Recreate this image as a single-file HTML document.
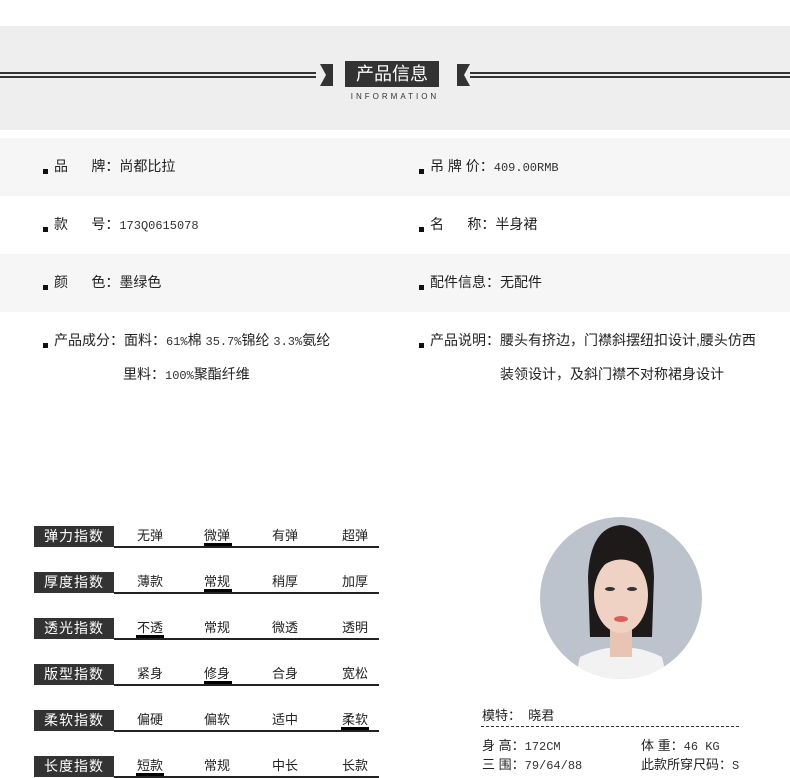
<!DOCTYPE html>
<html><head><meta charset="utf-8"><style>
body{margin:0;width:790px;height:778px;background:#fff;position:relative;overflow:hidden;font-family:"Liberation Sans","Noto Sans CJK SC",sans-serif;font-size:14px;color:#222}
.a{position:absolute}
.hdr{left:0;top:26px;width:790px;height:104px;background:#eeeeee}
.row{left:0;width:790px;height:58px}
.t{position:absolute;font-size:14px;white-space:nowrap}
.t b{font-weight:normal;font-family:"Liberation Mono","Noto Sans CJK SC",monospace;font-size:12px;color:#333}
.dot{position:absolute;width:5px;height:5px;background:#111}
.lab{position:absolute;left:34px;width:80px;height:21px;background:#333;color:#fff;font-size:14px;text-align:center;line-height:21px;letter-spacing:1px}
.ln{position:absolute;left:114px;width:265px;height:2px;background:#222}
.o{position:absolute;width:40px;text-align:center;font-size:13px}
.u{position:absolute;width:28px;height:3px;background:#000}
</style></head><body>
<div class="a hdr"></div>
<div class="a" style="left:0;top:72px;width:316px;height:2px;background:#333"></div>
<div class="a" style="left:0;top:76px;width:316px;height:2px;background:#333"></div>
<div class="a" style="left:470px;top:72px;width:320px;height:2px;background:#333"></div>
<div class="a" style="left:470px;top:76px;width:320px;height:2px;background:#333"></div>
<svg class="a" style="left:320px;top:62px" width="150" height="26"><polygon points="0,2 13,2 13,24 0,24 6,13" fill="#333"/><polygon points="150,2 137,2 137,24 150,24 144,13" fill="#333"/></svg>
<div class="a" style="left:345px;top:61px;width:94px;height:26px;background:#333;color:#fff;font-size:18px;text-align:center;line-height:26px">产品信息</div>
<div class="a" style="left:320px;top:92px;width:150px;text-align:center;font-size:8px;letter-spacing:3px;color:#333">INFORMATION</div>

<div class="a row" style="top:138px;background:#f6f6f6"></div>
<div class="a row" style="top:254px;background:#f6f6f6"></div>

<div class="dot" style="left:43px;top:169px"></div><div class="t" style="left:54px;top:156px">品&nbsp;&nbsp;&nbsp;&nbsp;&nbsp;&nbsp;牌：尚都比拉</div>
<div class="dot" style="left:419px;top:169px"></div><div class="t" style="left:430px;top:156px">吊 牌 价：<b>409.00RMB</b></div>
<div class="dot" style="left:43px;top:227px"></div><div class="t" style="left:54px;top:214px">款&nbsp;&nbsp;&nbsp;&nbsp;&nbsp;&nbsp;号：<b>173Q0615078</b></div>
<div class="dot" style="left:419px;top:227px"></div><div class="t" style="left:430px;top:214px">名&nbsp;&nbsp;&nbsp;&nbsp;&nbsp;&nbsp;称：半身裙</div>
<div class="dot" style="left:43px;top:285px"></div><div class="t" style="left:54px;top:272px">颜&nbsp;&nbsp;&nbsp;&nbsp;&nbsp;&nbsp;色：墨绿色</div>
<div class="dot" style="left:419px;top:285px"></div><div class="t" style="left:430px;top:272px">配件信息：无配件</div>
<div class="dot" style="left:43px;top:343px"></div><div class="t" style="left:54px;top:330px">产品成分：面料：<b>61%</b>棉 <b>35.7%</b>锦纶 <b>3.3%</b>氨纶</div>
<div class="t" style="left:123px;top:364px">里料：<b>100%</b>聚酯纤维</div>
<div class="dot" style="left:419px;top:343px"></div><div class="t" style="left:430px;top:330px">产品说明：腰头有挤边，门襟斜摆纽扣设计,腰头仿西</div>
<div class="t" style="left:500px;top:364px">装领设计，及斜门襟不对称裙身设计</div>

<div class="lab" style="top:526px">弹力指数</div><div class="ln" style="top:546px"></div>
<div class="o" style="left:130px;top:525px">无弹</div><div class="o" style="left:197px;top:525px">微弹</div><div class="o" style="left:265px;top:525px">有弹</div><div class="o" style="left:335px;top:525px">超弹</div><div class="u" style="left:204px;top:543px"></div>
<div class="lab" style="top:572px">厚度指数</div><div class="ln" style="top:592px"></div>
<div class="o" style="left:130px;top:571px">薄款</div><div class="o" style="left:197px;top:571px">常规</div><div class="o" style="left:265px;top:571px">稍厚</div><div class="o" style="left:335px;top:571px">加厚</div><div class="u" style="left:204px;top:589px"></div>
<div class="lab" style="top:618px">透光指数</div><div class="ln" style="top:638px"></div>
<div class="o" style="left:130px;top:617px">不透</div><div class="o" style="left:197px;top:617px">常规</div><div class="o" style="left:265px;top:617px">微透</div><div class="o" style="left:335px;top:617px">透明</div><div class="u" style="left:136px;top:635px"></div>
<div class="lab" style="top:664px">版型指数</div><div class="ln" style="top:684px"></div>
<div class="o" style="left:130px;top:663px">紧身</div><div class="o" style="left:197px;top:663px">修身</div><div class="o" style="left:265px;top:663px">合身</div><div class="o" style="left:335px;top:663px">宽松</div><div class="u" style="left:204px;top:681px"></div>
<div class="lab" style="top:710px">柔软指数</div><div class="ln" style="top:730px"></div>
<div class="o" style="left:130px;top:709px">偏硬</div><div class="o" style="left:197px;top:709px">偏软</div><div class="o" style="left:265px;top:709px">适中</div><div class="o" style="left:335px;top:709px">柔软</div><div class="u" style="left:341px;top:727px"></div>
<div class="lab" style="top:756px">长度指数</div><div class="ln" style="top:776px"></div>
<div class="o" style="left:130px;top:755px">短款</div><div class="o" style="left:197px;top:755px">常规</div><div class="o" style="left:265px;top:755px">中长</div><div class="o" style="left:335px;top:755px">长款</div><div class="u" style="left:136px;top:773px"></div>

<svg class="a" style="left:540px;top:517px" width="162" height="162"><defs><clipPath id="c"><circle cx="81" cy="81" r="81"/></clipPath></defs><g clip-path="url(#c)"><rect width="162" height="162" fill="#bcc3cc"/><path d="M35,162 L40,140 Q81,120 122,140 L127,162Z" fill="#f2f2f2"/><path d="M48,60 Q50,10 81,8 Q112,10 114,60 L112,120 L50,120Z" fill="#1e1a1a"/><rect x="70" y="110" width="22" height="30" fill="#e8c4b4"/><ellipse cx="81" cy="78" rx="27" ry="38" fill="#efd2c4"/><path d="M55,55 Q81,30 107,55 L107,42 Q81,18 55,42Z" fill="#1e1a1a"/><ellipse cx="70" cy="72" rx="5" ry="2" fill="#333"/><ellipse cx="92" cy="72" rx="5" ry="2" fill="#333"/><ellipse cx="81" cy="102" rx="7" ry="3" fill="#d9605a"/></g></svg>

<div class="t" style="left:482px;top:705px;font-size:13px">模特：&nbsp;&nbsp;晓君</div>
<div class="a" style="left:481px;top:726px;width:258px;border-top:1px dashed #333"></div>
<div class="t" style="left:482px;top:735px;font-size:13px">身 高：<b>172CM</b></div>
<div class="t" style="left:641px;top:735px;font-size:13px">体 重：<b>46 KG</b></div>
<div class="t" style="left:482px;top:754px;font-size:13px">三 围：<b>79/64/88</b></div>
<div class="t" style="left:641px;top:754px;font-size:13px">此款所穿尺码：<b>S</b></div>
</body></html>
